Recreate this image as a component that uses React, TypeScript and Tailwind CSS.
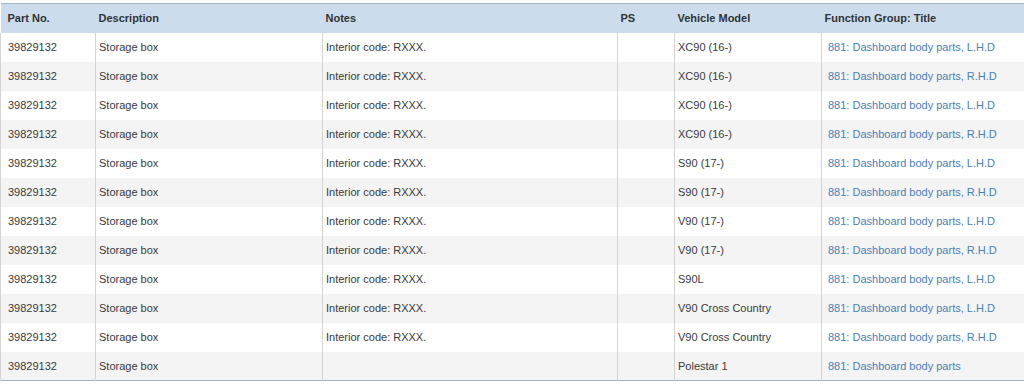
const rows = [
  ["XC90 (16-)", "881: Dashboard body parts, L.H.D", true],
  ["XC90 (16-)", "881: Dashboard body parts, R.H.D", true],
  ["XC90 (16-)", "881: Dashboard body parts, L.H.D", true],
  ["XC90 (16-)", "881: Dashboard body parts, R.H.D", true],
  ["S90 (17-)", "881: Dashboard body parts, L.H.D", true],
  ["S90 (17-)", "881: Dashboard body parts, R.H.D", true],
  ["V90 (17-)", "881: Dashboard body parts, L.H.D", true],
  ["V90 (17-)", "881: Dashboard body parts, R.H.D", true],
  ["S90L", "881: Dashboard body parts, L.H.D", true],
  ["V90 Cross Country", "881: Dashboard body parts, L.H.D", true],
  ["V90 Cross Country", "881: Dashboard body parts, R.H.D", true],
  ["Polestar 1", "881: Dashboard body parts", false],
] as const;

const headers = ["Part No.", "Description", "Notes", "PS", "Vehicle Model", "Function Group: Title"];

export default function App() {
  return (
    <div className="w-[1024px] h-[384px] bg-white pt-[3px] font-['Liberation_Sans',Arial,sans-serif] text-[11px] text-[#3a3a3a] overflow-hidden">
      <table className="w-full table-fixed border-collapse border-t border-b border-t-[#a9b4c0] border-b-[#a9b4c0]">
        <colgroup>
          <col className="w-[95px]" />
          <col className="w-[227px]" />
          <col className="w-[295px]" />
          <col className="w-[57px]" />
          <col className="w-[147px]" />
          <col />
        </colgroup>
        <thead>
          <tr className="h-[29px] bg-[#cddcec]">
            {headers.map((h, i) => (
              <th
                key={h}
                className={`text-left font-bold text-[#2f3438] ${i === 0 ? "pl-[7px]" : "pl-[3px]"}`}
              >
                {h}
              </th>
            ))}
          </tr>
        </thead>
        <tbody>
          {rows.map(([model, group, notes], i) => (
            <tr key={i} className={`h-[29px] ${i % 2 === 0 ? "bg-white" : "bg-[#f4f4f4]"}`}>
              <td className="pl-[7px] border-l border-[#d4d4d4]">39829132</td>
              <td className="pl-[3px] border-l border-[#d4d4d4]">Storage box</td>
              <td className="pl-[3px] border-l border-[#d4d4d4]">{notes ? "Interior code: RXXX." : ""}</td>
              <td className="border-l border-[#d4d4d4]"></td>
              <td className="pl-[3px] border-l border-[#d4d4d4]">{model}</td>
              <td className="pl-[6px] border-l border-[#d4d4d4] whitespace-nowrap text-[#4a80b4]">{group}</td>
            </tr>
          ))}
        </tbody>
      </table>
    </div>
  );
}
